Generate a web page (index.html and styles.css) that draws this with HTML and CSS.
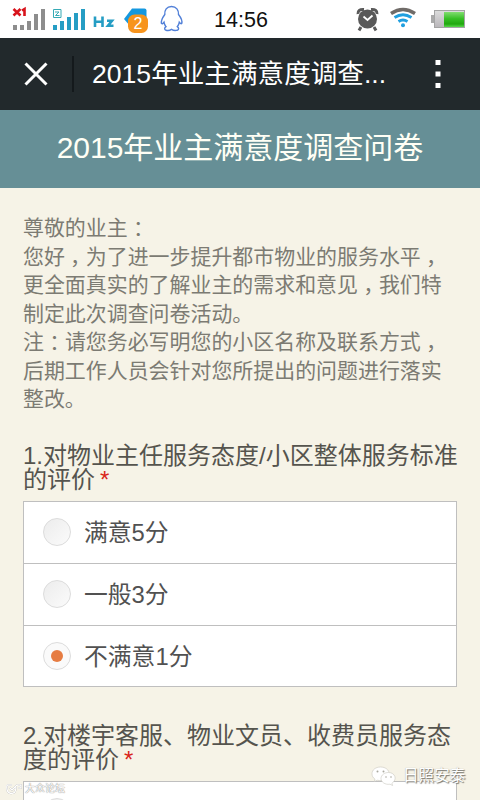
FILE: index.html
```html
<!DOCTYPE html>
<html lang="zh-CN">
<head>
<meta charset="utf-8">
<title>2015年业主满意度调查问卷</title>
<link rel="stylesheet" href="styles.css">
</head>
<body>
<div class="screen">
  <div class="status">
    <svg class="status-left" width="190" height="38" viewBox="0 0 190 38">
      <g fill="#8d8d8d"><path d="M13 25h4v5h-4zM20 25h4v5h-4zM27 21h4v9h-4zM34 14h4v16h-4zM41 9h4v21h-4z"/></g>
      <g fill="none" stroke="#d8131b" stroke-width="2.6"><path d="M13.500 9l7 6.500M20.500 9l-7 6.500M22 10.500l2.500-1.500v7"/></g>
      <g fill="#259dc4"><path d="M53 25h4v5h-4zM60 21h4v9h-4zM67 17h4v13h-4zM74 13h4v17h-4zM81 9h4v21h-4z"/></g>
      <path d="M53.500 9.500h7.500v8h-7.500zM55 12h4l-3.500 3.500h4" fill="none" stroke="#35aab5" stroke-width="1"/>
      <path d="M95 16.500v10.500M102.500 16.500v10.500M95 21.800h7M107 20.800h5l-4 5h5.500" fill="none" stroke="#259dc4" stroke-width="2.600"/>
      <path d="M124 19l8-10.500h12.500q2 0 2 2V26H130z" fill="#1598df"/>
      <rect x="128" y="14.500" width="20" height="18.500" rx="6.500" fill="#f7941d"/>
      <path d="M171.500 6.500c-5 0-7 3.500-6.700 8-2.200 3-3.800 7-3.300 9 1 .8 1.700-.3 2.500-1.300.3 2 1 3.500 2 4.500-1.600 1-2 3 0 3.500 2 .5 4 .2 5.500-.8 1.500 1 4 1.300 5.800.8 2-.5 1.500-2.500 0-3.500 1-1 1.700-2.500 2-4.500.8 1 1.500 2 2.400 1.300.6-2-.8-6-3.200-9 .2-4.500-2-8-7-8z" fill="#fff" stroke="#5280d8" stroke-width="1.400"/>
    </svg>
    <span class="badge">2</span>
    <span class="time">14:56</span>
    <svg class="status-right" width="125" height="38" viewBox="355 0 125 38">
      <g fill="none" stroke="#595959" stroke-width="3"><path d="M358 14q-.5-5 6-4.500M377 14q.5-5-6-4.500M361 27l-2 3.500M374 27l2 3.500"/></g>
      <circle cx="367.500" cy="19" r="9.500" fill="#595959"/>
      <path d="M363.500 16.500l4 3.500 5-4.500" fill="none" stroke="#fff" stroke-width="1.800"/>
      <g fill="none" stroke-width="3.400"><path d="M391 13.500q12-8 24 0" stroke="#706b68"/><path d="M394.500 17.500q8.500-5.500 17 0M398.500 21.500q4.500-3 9 0" stroke="#209fdf" stroke-width="2.800"/></g>
      <circle cx="403" cy="25.300" r="2" fill="#209fdf"/>
      <defs><linearGradient id="bg" x2="0" y2="1"><stop stop-color="#81dd70"/><stop offset=".45" stop-color="#36bf25"/><stop offset=".8" stop-color="#21a80f"/><stop offset="1" stop-color="#58d84a"/></linearGradient><linearGradient id="bw" x2="0" y2="1"><stop stop-color="#ddd"/><stop offset="1" stop-color="#b9b6ba"/></linearGradient></defs>
      <path d="M431 15h4v8h-4z" fill="#aaa"/><rect x="434.500" y="10.500" width="30" height="17" fill="url(#bw)" stroke="#a4a4a4"/><path d="M444 12h20v15h-20z" fill="url(#bg)"/>
    </svg>
  </div>
  <header class="nav">
    <svg class="close" width="24" height="24" viewBox="0 0 24 24"><path d="M1.500 1.500l21 21M22.500 1.500l-21 21" stroke="#fff" stroke-width="3" fill="none"/></svg>
    <div class="divider"></div>
    <div class="nav-title">2015年业主满意度调查...</div>
    <svg class="more" width="6" height="29" viewBox="0 0 6 29"><path d="M.5 0h5v5h-5zM.5 11.500h5v5h-5zM.5 23h5v5h-5z" fill="#fff"/></svg>
  </header>
  <h1 class="banner">2015年业主满意度调查问卷</h1>
  <main class="content">
    <p class="intro">尊敬的业主<span class="p">：</span><br>您好<span class="p">，</span>为了进一步提升都市物业的服务水平<span class="p">，</span><br>更全面真实的了解业主的需求和意见<span class="p">，</span>我们特<br>制定此次调查问卷活动。<br>注<span class="p">：</span>请您务必写明您的小区名称及联系方式<span class="p">，</span><br>后期工作人员会针对您所提出的问题进行落实<br>整改。</p>
    <h2 class="question">1.对物业主任服务态度/小区整体服务标准<br>的评价<span class="req">*</span></h2>
    <div class="options">
      <div class="option"><i class="radio"></i><span class="label">满意5分</span></div>
      <div class="option"><i class="radio"></i><span class="label">一般3分</span></div>
      <div class="option"><i class="radio checked"></i><span class="label">不满意1分</span></div>
    </div>
    <h2 class="question second">2.对楼宇客服、物业文员、收费员服务态<br>度的评价<span class="req">*</span></h2>
    <div class="options">
      <div class="option"><i class="radio"></i></div>
    </div>
  </main>
  <div class="mark mark-left">
    <svg width="16" height="12" viewBox="0 0 16 12"><path d="M1 2h5M1 2q-1 8 4 8.500 5 0 5-6M4 5l2 2 5-5M11 2h4v3h-3" fill="none" stroke="#fff" stroke-width="1.500"/></svg>
    <span>大众论坛</span>
  </div>
  <div class="mark mark-right">
    <svg width="26" height="20" viewBox="0 0 26 20"><g fill="#fff" stroke="#c9c8c0" stroke-width=".6"><path d="M9.500 1C4.500 1 1 4 1 7.800c0 2.200 1 4 3 5.300l-.8 2.500 3-1.400c6 1.500 12-1.500 12-6.400C18.200 4 14.500 1 9.500 1z"/><path d="M17.500 6.500c-4 0-7.500 2.500-7.500 6s4 6.500 9 5.700l2.600 1.300-.7-2.200c6-4 3-10.800-3.400-10.800z"/></g><g fill="#aaa99f"><circle cx="6.500" cy="5.500" r="1"/><circle cx="12.500" cy="5.500" r="1"/><circle cx="15" cy="11" r=".8"/><circle cx="20" cy="11" r=".8"/></g></svg>
    <span>日照安泰</span>
  </div>
</div>
</body>
</html>
```
FILE: styles.css
```css
* { box-sizing: border-box; }
body {
  margin: 0;
  background: #f6f3e7;
  font-family: "Liberation Sans", "Noto Sans CJK SC", sans-serif;
}
.screen {
  position: relative;
  width: 480px;
  height: 800px;
  overflow: hidden;
  background: #f6f3e7;
}
.status {
  position: relative;
  display: flex;
  align-items: center;
  height: 38px;
  background: #fff;
}
.status-left { flex: none; }
.badge {
  position: absolute;
  left: 128px;
  top: 14px;
  width: 20px;
  font-size: 16px;
  line-height: 20px;
  text-align: center;
  color: #fff;
}
.time {
  width: 102px;
  text-align: center;
  font-size: 21.5px;
  line-height: 38px;
  margin-top: 2px;
  color: #111;
}
.status-right { margin-left: auto; }
.nav {
  display: flex;
  align-items: center;
  height: 72px;
  background: #22292c;
  color: #fff;
}
.close { margin-left: 24px; }
.divider {
  width: 2px;
  height: 36px;
  margin-left: 24px;
  background: #14191c;
}
.nav-title {
  margin-left: 18px;
  width: 340px;
  font-size: 26.6px;
  line-height: 36px;
  white-space: nowrap;
}
.more { margin-left: 3px; }
.banner {
  margin: 0;
  height: 78px;
  line-height: 76px;
  background: #668f96;
  color: #fffff5;
  font-size: 30px;
  font-weight: 400;
  text-align: center;
}
.content { padding: 26px 23px 0; }
.intro {
  margin: 0;
  font-size: 20.95px;
  line-height: 28.5px;
  color: #7c7b73;
  white-space: nowrap;
}
.p {
  padding: 0 .25em;
  font-feature-settings: "halt";
}
.question {
  margin: 30px 0 9px;
  font-size: 24px;
  line-height: 24px;
  font-weight: 400;
  color: #55544e;
  white-space: nowrap;
}
.second { margin-top: 37px; }
.req {
  margin-left: 5px;
  color: #d9261c;
}
.options {
  border: 1px solid #bfbfbf;
  background: #fff;
}
.option {
  display: flex;
  align-items: center;
  height: 61px;
  padding-left: 19px;
  font-size: 23.8px;
  color: #515151;
}
.option + .option {
  height: 62px;
  border-top: 1px solid #bfbfbf;
}
.option + .option:last-child { height: 61px; }
.label { padding-bottom: 3px; }
.radio {
  display: flex;
  align-items: center;
  justify-content: center;
  width: 28px;
  height: 28px;
  margin-right: 13px;
  border: 1px solid #dcdcdc;
  border-radius: 50%;
  background: linear-gradient(135deg, #ececec, #fbfbfb);
}
.checked { background: #fafafa; }
.checked::after {
  content: "";
  width: 12px;
  height: 12px;
  border-radius: 50%;
  background: #e67c42;
}
.mark {
  position: absolute;
  display: flex;
  align-items: center;
  color: #fff;
  white-space: nowrap;
}
.mark-left {
  left: 6px;
  top: 782px;
  gap: 3px;
  font-size: 10px;
  line-height: 14px;
  text-shadow: 0 0 1px #888, 0 0 1px #999;
}
.mark-left svg { filter: drop-shadow(0 0 .6px #888); }
.mark-right {
  left: 371px;
  top: 766px;
  gap: 6px;
  font-size: 15.6px;
  line-height: 20px;
  text-shadow: 1px 1px 1px #77766f, 0 0 1px #aaa;
}
```
